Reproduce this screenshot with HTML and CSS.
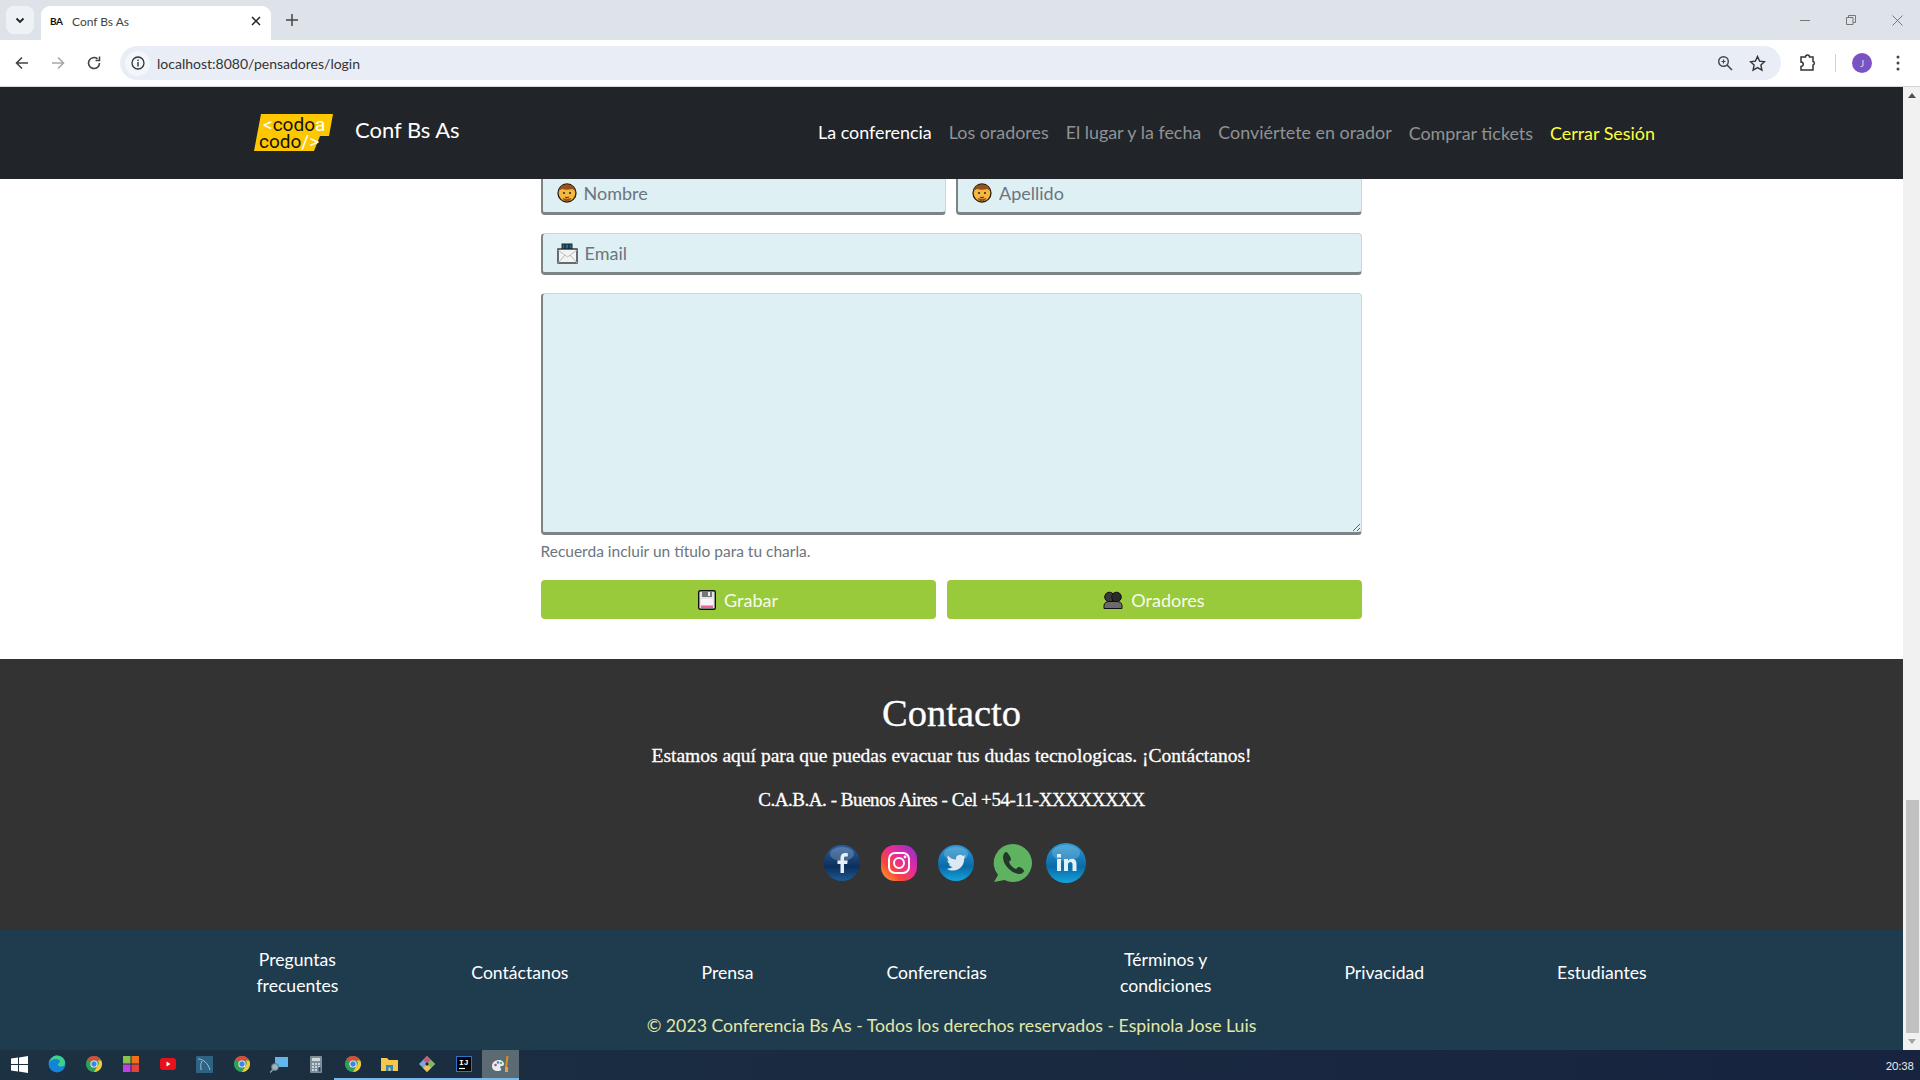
FILE: index.html
```html
<!DOCTYPE html>
<html lang="es">
<head>
  <meta charset="UTF-8" />
  <title>Conf Bs As</title>
  <link rel="stylesheet" href="styles.css">
</head>
<body>

  <svg class="sprites" width="0" height="0">
    <symbol id="man" viewBox="0 0 20 20">
      <circle cx="10" cy="10" r="9" fill="#f6b73f" stroke="#2a1c0c" stroke-width="1.300"/>
      <path d="M2 8.500C2.500 4 5.500 1.500 10 1.500s7.500 2.500 8 7c-1-1.500-2-2.500-3-2.500-3 1-7 1-10 0-1 0-2 1-3 2.500z" fill="#96531f"/>
      <path d="M5.500 15c1 2 2.500 3.500 4.500 3.500s3.500-1.500 4.500-3.500c-3 1-6 1-9 0z" fill="#96531f"/>
      <circle cx="7" cy="10" r="1" fill="#222"/><circle cx="13" cy="10" r="1" fill="#222"/>
      <path d="M8 14c1.300.7 2.700.7 4 0" stroke="#5a2c10" stroke-width="1" fill="none"/>
    </symbol>
    <symbol id="chrome" viewBox="0 0 20 20">
      <circle cx="10" cy="10" r="9" fill="#2f9e56"/>
      <path d="M10 1a9 9 0 0 1 8 5h-8a4 4 0 0 0-4 2L3 4a9 9 0 0 1 7-3z" fill="#e0483e"/>
      <path d="M18 6a9 9 0 0 1-8 13l4-7a4 4 0 0 0 0-6z" fill="#f6c63c"/>
      <circle cx="10" cy="10" r="4" fill="#fff"/><circle cx="10" cy="10" r="3" fill="#3f83e6"/>
    </symbol>
    <linearGradient id="gradFb" x1="0" y1="0" x2="0" y2="1"><stop offset="0" stop-color="#2b5f9e"/><stop offset=".6" stop-color="#0c2f5c"/><stop offset="1" stop-color="#1d5a94"/></linearGradient>
    <linearGradient id="gradBlue" x1="0" y1="0" x2="0" y2="1"><stop offset="0" stop-color="#2f9ad6"/><stop offset=".6" stop-color="#0a6aa8"/><stop offset="1" stop-color="#14a4dc"/></linearGradient>
    <linearGradient id="gradIg" x1="0" y1="1" x2="1" y2="0"><stop offset="0" stop-color="#fdb02c"/><stop offset=".3" stop-color="#f9453b"/><stop offset=".6" stop-color="#e72a9c"/><stop offset="1" stop-color="#8434d0"/></linearGradient>
  </svg>

  <header class="browser">
    <div class="tabstrip">
      <button class="tab-search"><svg width="12" height="12" viewBox="0 0 12 12"><path d="M2.500 4.500 6 8l3.500-3.500" fill="none" stroke="#222" stroke-width="1.800"/></svg></button>
      <div class="tab">
        <b class="favicon">BA</b>
        <span class="tab-title">Conf Bs As</span>
        <svg class="tab-close" width="10" height="10" viewBox="0 0 10 10"><path d="M1 1l8 8M9 1l-8 8" stroke="#222" stroke-width="1.500"/></svg>
      </div>
      <svg class="new-tab" width="12" height="12" viewBox="0 0 12 12"><path d="M6 0v12M0 6h12" stroke="#444" stroke-width="1.500"/></svg>
      <div class="win-controls">
        <svg width="10" height="10" viewBox="0 0 10 10"><path d="M0 5.500h10" stroke="#777"/></svg>
        <svg width="10" height="10" viewBox="0 0 10 10"><path d="M.5 2.500h6.500v7H.5zM2.500 2.500V.5h7v7H7" fill="none" stroke="#777"/></svg>
        <svg width="11" height="11" viewBox="0 0 11 11"><path d="M.5.500l10 10M10.500.500l-10 10" stroke="#777"/></svg>
      </div>
    </div>
    <div class="toolbar">
      <svg width="16" height="16" viewBox="0 0 16 16"><path d="M14 8H3M8 2.500 2.500 8 8 13.500" fill="none" stroke="#444" stroke-width="1.600"/></svg>
      <svg width="16" height="16" viewBox="0 0 16 16"><path d="M2 8h11M8 2.500 13.500 8 8 13.500" fill="none" stroke="#a8a8a8" stroke-width="1.600"/></svg>
      <svg width="16" height="16" viewBox="0 0 16 16"><path d="M13.500 8A5.500 5.500 0 1 1 11.500 3.800M13.500 1.500v4h-4" fill="none" stroke="#444" stroke-width="1.600"/></svg>
      <div class="omnibox">
        <span class="site-info"><svg width="14" height="14" viewBox="0 0 14 14"><circle cx="7" cy="7" r="6" fill="none" stroke="#333" stroke-width="1.300"/><path d="M7 6v4.500M7 3.500v1.500" stroke="#333" stroke-width="1.400"/></svg></span>
        <span class="url">localhost:8080/pensadores/login</span>
        <svg class="omni-zoom" width="16" height="16" viewBox="0 0 16 16"><circle cx="6.500" cy="6.500" r="4.800" fill="none" stroke="#444" stroke-width="1.400"/><path d="M10 10l5 5" stroke="#444" stroke-width="1.600"/><path d="M6.500 4.500v4M4.500 6.500h4" stroke="#444" stroke-width="1.200"/></svg>
        <svg width="17" height="17" viewBox="0 0 17 17"><path d="M8.500 1.500l2.100 4.600 5 .6-3.700 3.400 1 5-4.400-2.500-4.400 2.500 1-5L1.400 6.700l5-.6z" fill="none" stroke="#333" stroke-width="1.400"/></svg>
      </div>
      <svg class="puzzle" width="18" height="18" viewBox="0 0 18 18"><path d="M2 3h4.500a2 2 0 0 1 4 0H14v4.500a1.800 1.800 0 0 1 0 3.500v5H2v-3.500a2 2 0 0 0 0-4.500z" fill="none" stroke="#333" stroke-width="1.500"/></svg>
      <span class="tool-sep"></span>
      <span class="avatar">J</span>
      <svg class="tool-menu" width="4" height="16" viewBox="0 0 4 16"><circle cx="2" cy="2" r="1.500" fill="#444"/><circle cx="2" cy="8" r="1.500" fill="#444"/><circle cx="2" cy="14" r="1.500" fill="#444"/></svg>
    </div>
  </header>

  <div class="viewport">
    <div class="page">
      <nav class="navbar">
        <a class="brand" href="#">
          <svg class="logo" width="79" height="37" viewBox="0 0 79 37">
            <path d="M7 0H79L75 22H66L60 37H0z" fill="#fdc800"/>
            <text x="9" y="17" class="logo-text"><tspan fill="#fff">&lt;</tspan>codo<tspan fill="#fff">a</tspan></text>
            <text x="5" y="34" class="logo-text">codo<tspan fill="#fff">/&gt;</tspan></text>
          </svg>
          <span class="brand-name">Conf Bs As</span>
        </a>
        <ul class="nav-links">
          <li><a class="active" href="#">La conferencia</a></li>
          <li><a href="#">Los oradores</a></li>
          <li><a href="#">El lugar y la fecha</a></li>
          <li><a href="#">Conviértete en orador</a></li>
          <li class="low"><a href="#">Comprar tickets</a></li>
          <li class="low"><a class="logout" href="#">Cerrar Sesión</a></li>
        </ul>
      </nav>

      <main class="content">
        <form class="charla">
          <div class="row">
            <label class="field half">
              <svg class="ico" width="20" height="20"><use href="#man"/></svg>
              <input type="text" placeholder="Nombre" />
            </label>
            <label class="field half">
              <svg class="ico" width="20" height="20"><use href="#man"/></svg>
              <input type="text" placeholder="Apellido" />
            </label>
          </div>
          <label class="field">
            <svg class="ico" width="21" height="21" viewBox="0 0 21 21">
              <rect x="5" y="1" width="10" height="7" fill="#1c6f8e" stroke="#222"/>
              <path d="M8 1v6M12 1v6" stroke="#111"/>
              <rect x="1" y="6" width="19" height="14" fill="#f2f4f4" stroke="#222" stroke-width="1.300"/>
              <path d="M1 7l9.500 7L20 7M1 20l7-8M20 20l-7-8" stroke="#bbb" fill="none"/>
            </svg>
            <input type="text" placeholder="Email" />
          </label>
          <textarea class="charla-text"></textarea>
          <small class="help">Recuerda incluir un título para tu charla.</small>
          <div class="actions">
            <button type="button" class="btn btn-save">
              <svg width="18" height="20" viewBox="0 0 18 20">
                <rect x=".7" y=".7" width="16.600" height="18.600" rx="1.500" fill="#e6e3e6" stroke="#111" stroke-width="1.400"/>
                <rect x="4" y="1" width="10" height="6" fill="#777"/><rect x="10" y="2" width="2" height="4" fill="#eee"/>
                <rect x="3" y="9" width="12" height="9" fill="#f7f3f6"/><rect x="3" y="15.500" width="12" height="2.500" fill="#ef5f9c"/>
              </svg>
              Grabar
            </button>
            <button type="button" class="btn btn-speakers">
              <svg width="20" height="18" viewBox="0 0 20 18">
                <circle cx="6.500" cy="6" r="4.800" fill="#3a3a3a" stroke="#111"/>
                <circle cx="13.500" cy="6" r="4.800" fill="#2b2b2b" stroke="#111"/>
                <path d="M1 17.500v-3c0-3 3-4 5-4h8c2 0 5 1 5 4v3z" fill="#6a6a6a" stroke="#111"/>
              </svg>
              Oradores
            </button>
          </div>
        </form>
      </main>

      <section class="contact">
        <h2>Contacto</h2>
        <p class="contact-intro">Estamos aquí para que puedas evacuar tus dudas tecnologicas. ¡Contáctanos!</p>
        <p class="contact-tel">C.A.B.A. - Buenos Aires - Cel +54-11-XXXXXXXX</p>
        <div class="social">
          <a href="#"><svg width="36" height="36" viewBox="0 0 36 36">
            <circle cx="18" cy="18" r="18" fill="url(#gradFb)"/>
            <ellipse cx="18" cy="9" rx="12" ry="7" fill="#fff" opacity=".2"/>
            <path d="M20 28v-9h3.200l.5-3.600H20v-2.300c0-1 .4-1.700 1.800-1.700h2V8.200c-.6-.1-1.600-.2-2.700-.2-2.700 0-4.600 1.700-4.600 4.700v2.700h-3V19h3v9z" fill="#e8eef5"/>
          </svg></a>
          <a href="#"><svg width="36" height="36" viewBox="0 0 36 36">
            <rect width="36" height="36" rx="14" fill="url(#gradIg)"/>
            <rect x="8" y="8" width="20" height="20" rx="6" fill="none" stroke="#fff" stroke-width="2"/>
            <circle cx="18" cy="18" r="5" fill="none" stroke="#fff" stroke-width="2"/>
            <circle cx="24" cy="12" r="1.400" fill="#fff"/>
          </svg></a>
          <a href="#"><svg width="36" height="36" viewBox="0 0 36 36">
            <circle cx="18" cy="18" r="18" fill="url(#gradBlue)"/>
            <ellipse cx="18" cy="9" rx="12" ry="7" fill="#fff" opacity=".18"/>
            <path d="M28 11.500c-.8.400-1.500.600-2.300.700.800-.5 1.400-1.200 1.700-2.100-.8.400-1.600.800-2.500.9a4 4 0 0 0-6.800 3.600c-3.300-.200-6.200-1.700-8.200-4.200-1 1.900-.5 4 1.200 5.300-.6 0-1.200-.2-1.700-.5 0 1.900 1.300 3.500 3.200 3.900-.6.200-1.200.2-1.800.1.500 1.600 2 2.700 3.700 2.800-1.700 1.300-3.800 1.900-5.900 1.700 5 3.100 11.500 2.300 15-2.200 1.900-2.400 2.700-5.200 2.500-8 .8-.6 1.400-1.200 1.900-2z" fill="#dbe9f3"/>
          </svg></a>
          <a class="wa" href="#"><svg width="40" height="40" viewBox="0 0 40 40">
            <path d="M21 1a19 19 0 1 1-8.500 36L2 39l4-7A19 19 0 0 1 21 1z" fill="#5fb360"/>
            <path d="M14 9c-1 0-3 2-3 5 0 8 8 16 16 17 3 0 5-2 5-3 0-2-4-4-5-4-2 0-2 2-3 2-3-1-6-4-7-7 0-1 2-1 2-3 0-1-3-7-5-7z" fill="#23372a"/>
          </svg></a>
          <a class="in" href="#"><svg width="40" height="40" viewBox="0 0 40 40">
            <circle cx="20" cy="20" r="20" fill="url(#gradBlue)"/>
            <ellipse cx="20" cy="10" rx="14" ry="8" fill="#fff" opacity=".18"/>
            <path d="M11 16h4v12h-4zM11 11h4v3.500h-4zM18 16h4v1.800c1-1.300 2.200-2.100 4-2.100 3 0 4.500 2 4.500 5V28h-4v-6.500c0-1.700-.7-2.600-2.100-2.600-1.500 0-2.400 1-2.400 2.700V28h-4z" fill="#dff0f8"/>
          </svg></a>
        </div>
      </section>

      <footer class="site-footer">
        <ul class="footer-links">
          <li><a href="#">Preguntas<br>frecuentes</a></li>
          <li><a href="#">Contáctanos</a></li>
          <li><a href="#">Prensa</a></li>
          <li><a href="#">Conferencias</a></li>
          <li><a href="#">Términos y<br>condiciones</a></li>
          <li><a href="#">Privacidad</a></li>
          <li><a href="#">Estudiantes</a></li>
        </ul>
        <p class="copyright">© 2023 Conferencia Bs As - Todos los derechos reservados - Espinola Jose Luis</p>
      </footer>
    </div>

    <div class="scrollbar">
      <span class="arrow-up"></span>
      <span class="thumb"></span>
      <span class="arrow-down"></span>
    </div>
  </div>

  <div class="taskbar">
    <div class="task-icons">
      <span class="task"><svg width="17" height="17" viewBox="0 0 17 17"><path d="M0 2.500 7 1.500v6.500H0zM8 1.400 17 0v8H8zM0 9h7v6.500L0 14.500zM8 9h9v8l-9-1.400z" fill="#fff"/></svg></span>
      <span class="task"><svg width="18" height="18" viewBox="0 0 18 18"><circle cx="9" cy="9" r="8.500" fill="#1583d8"/><path d="M1 8c1-5 5-7.500 8-7.500 4 0 8 3 8 7 0 3-2 4-4 4-1.500 0-3-.5-3-2 0-2 2-1 2-3 0-1.500-2-2.500-4-2.500C5 4 2 5.500 1 8z" fill="#3fd18a"/></svg></span>
      <span class="task"><svg width="18" height="18"><use href="#chrome"/></svg></span>
      <span class="task"><svg width="16" height="16" viewBox="0 0 16 16"><rect width="7.500" height="7.500" fill="#8bc34a"/><rect x="8.500" width="7.500" height="7.500" fill="#f0701a"/><rect y="8.500" width="7.500" height="7.500" fill="#c13fe0"/><rect x="8.500" y="8.500" width="7.500" height="7.500" fill="#e8413c"/></svg></span>
      <span class="task"><svg width="16" height="12" viewBox="0 0 16 12"><rect width="16" height="12" rx="3" fill="#e8111c"/><path d="M6.500 3.500v5l4-2.500z" fill="#fff"/></svg></span>
      <span class="task"><svg width="17" height="17" viewBox="0 0 17 17"><rect width="17" height="17" rx="1" fill="#2e6384"/><path d="M2 3c5 0 10 4 12 11M5 14c0-3-1-6 1-9" fill="none" stroke="#9cc3d8"/></svg></span>
      <span class="task"><svg width="18" height="18"><use href="#chrome"/></svg></span>
      <span class="task"><svg width="18" height="17" viewBox="0 0 18 17"><rect x="5" y="1" width="13" height="10" fill="#62b7ea"/><circle cx="5" cy="11" r="3.500" fill="#9fb2bf" stroke="#5b6f7d"/><path d="M3 13.500 0 16.500" stroke="#8aa" stroke-width="1.500"/></svg></span>
      <span class="task"><svg width="12" height="17" viewBox="0 0 12 17"><rect width="12" height="17" rx="1" fill="#7e8f9b"/><rect x="2" y="2" width="8" height="3" fill="#cfd8dd"/><path d="M2 8h2M5 8h2M8 8h2M2 11h2M5 11h2M8 11h2M2 14h2M5 14h2" stroke="#e4eaee" stroke-width="1.500"/><path d="M8.500 11h2v4.500h-2z" fill="#1b4f80"/></svg></span>
      <span class="task open"><svg width="18" height="18"><use href="#chrome"/></svg></span>
      <span class="task open"><svg width="17" height="14" viewBox="0 0 17 14"><path d="M0 1h6l2 2h9v11H0z" fill="#f5c84c"/><rect x="5" y="8" width="7" height="6" fill="#2f86c9"/><rect x="7.500" y="10.500" width="2" height="3.500" fill="#f5c84c"/></svg></span>
      <span class="task open"><svg width="16" height="16" viewBox="0 0 16 16"><path d="M8 0 16 8 8 16 0 8z" fill="#7aa7e0"/><path d="M8 0l4 4-4 4-4-4z" fill="#c65c7a"/><path d="M12 4l4 4-4 4-4-4z" fill="#82b858"/><path d="M8 8l4 4-4 4-4-4z" fill="#e8c554"/><circle cx="8" cy="8" r="1.500" fill="#222"/></svg></span>
      <span class="task open"><svg width="16" height="16" viewBox="0 0 16 16"><rect x=".5" y=".5" width="15" height="15" fill="#000" stroke="#2f73c4"/><path d="M3 12.500h6" stroke="#fff" stroke-width="1.200"/><text x="3" y="9" class="ij-text">IJ</text></svg></span>
      <span class="task open current"><svg width="19" height="17" viewBox="0 0 19 17"><path d="M1 10c0-4 4-6 7-6s5 2 5 4-2 2-3 2-1 2 0 3-1 2-3 2c-4 0-6-2-6-5z" fill="#e6eef5"/><circle cx="4.500" cy="9" r="1.300" fill="#d8433c"/><circle cx="7" cy="6.500" r="1.300" fill="#3f83e6"/><circle cx="10" cy="7" r="1.300" fill="#5cb85c"/><path d="M15 11 16.500 0" stroke="#e08a2e" stroke-width="2"/><path d="M14 11h3v5h-3z" fill="#e8a13c"/></svg></span>
    </div>
    <span class="clock">20:38</span>
  </div>

</body>
</html>
```

FILE: styles.css
```css
* {
  box-sizing: border-box;
}

html, body {
  height: 100%;
}

body {
  margin: 0;
  display: flex;
  flex-direction: column;
  height: 1080px;
  overflow: hidden;
  font-family: Lato, "Open Sans", sans-serif;
  background: #fff;
}

a {
  text-decoration: none;
  color: inherit;
}

ul {
  list-style: none;
  margin: 0;
  padding: 0;
}

.sprites {
  position: absolute;
}

/* browser */
.browser {
  flex: none;
  height: 87px;
  border-bottom: 1px solid #d4d6d8;
}

.tabstrip {
  height: 40px;
  background: #dee3ea;
  display: flex;
  align-items: flex-end;
  padding-left: 6px;
}

.tab-search {
  width: 28px;
  height: 28px;
  margin-bottom: 6px;
  border: 0;
  border-radius: 8px;
  background: #eef1f5;
  display: flex;
  align-items: center;
  justify-content: center;
  padding: 0;
}

.tab {
  width: 230px;
  height: 34px;
  margin-left: 7px;
  padding: 0 10px 4px 9px;
  background: #fff;
  border-radius: 9px 9px 0 0;
  display: flex;
  align-items: center;
}

.favicon {
  width: 22px;
  font-size: 10px;
  letter-spacing: -0.5px;
  color: #111;
}

.tab-title {
  flex: 1;
  font-size: 12px;
  color: #444;
}

.new-tab {
  margin: 0 0 14px 15px;
}

.win-controls {
  margin-left: auto;
  height: 40px;
  width: 120px;
  display: flex;
  gap: 36px;
  align-items: center;
}

.toolbar {
  height: 46px;
  background: #fff;
  display: flex;
  align-items: center;
  padding-left: 14px;
  gap: 20px;
  border-radius: 10px 10px 0 0;
}

.toolbar > * {
  flex: none;
}

.omnibox {
  width: 1661px;
  height: 34px;
  margin-left: -2px;
  background: #e9eef6;
  border-radius: 17px;
  display: flex;
  align-items: center;
  padding: 0 15px 0 5px;
  gap: 16px;
}

.site-info {
  width: 25px;
  height: 25px;
  border-radius: 50%;
  background: #f3f6fb;
  display: flex;
  align-items: center;
  justify-content: center;
  margin-right: -9px;
}

.url {
  flex: 1;
  font-size: 14px;
  color: #333;
}

.puzzle {
  margin-left: -2px;
}

.tool-sep {
  width: 1px;
  height: 18px;
  background: #c9d4e6;
  margin-left: -2px;
}

.avatar {
  width: 20px;
  height: 20px;
  border-radius: 50%;
  background: #7a52c4;
  color: #ddd;
  font-size: 10px;
  display: flex;
  align-items: center;
  justify-content: center;
  margin-left: -4px;
}

.tool-menu {
  margin-left: 4px;
}

/* page */
.viewport {
  flex: 1;
  display: flex;
  min-height: 0;
}

.page {
  flex: 1;
  min-width: 0;
  display: flex;
  flex-direction: column;
  overflow: hidden;
}

.navbar {
  position: relative;
  z-index: 2;
  flex: none;
  height: 92px;
  background: #212529;
  display: flex;
  align-items: center;
  padding: 0 248px 0 254px;
  justify-content: space-between;
}

.brand {
  display: flex;
  align-items: center;
  gap: 22px;
  color: #fff;
  font-size: 22px;
  margin-top: -2px;
}

.brand-name {
  margin-bottom: 5px;
}

.logo {
  overflow: visible;
}

.logo-text {
  font: 400 19px Roboto, sans-serif;
  fill: #111;
}

.nav-links {
  display: flex;
  gap: 17px;
  font-size: 17.900px;
  color: #909294;
  margin-top: -2px;
}

.nav-links .active {
  color: #fff;
}

.nav-links .low {
  margin-top: 1px;
}

.nav-links .logout {
  color: #ffff33;
}

.content {
  flex: none;
  height: 480px;
  padding: 0 1px 40px 0;
}

.charla {
  width: 821px;
  margin: -6px auto 0;
  display: flex;
  flex-direction: column;
}

.row {
  display: flex;
  gap: 10px;
}

.field {
  display: flex;
  align-items: center;
  height: 42px;
  padding-left: 14px;
  background: #def0f3;
  border: 1px solid #ced4da;
  border-left: 2px solid #7d8486;
  border-bottom: 3px solid #7d8486;
  border-radius: 4px;
  margin-bottom: 18px;
}

.half {
  flex: 1;
}

.ico {
  flex: none;
}

.field input {
  flex: 1;
  min-width: 0;
  height: 100%;
  border: 0;
  outline: 0;
  padding: 0 0 0 7px;
  background: transparent;
  font: 18px Lato, sans-serif;
}

.field input::placeholder {
  color: #6c757d;
  opacity: 1;
}

.charla-text {
  height: 242px;
  background: #def0f3;
  border: 1px solid #ced4da;
  border-left: 2px solid #7d8486;
  border-bottom: 3px solid #7d8486;
  border-radius: 4px;
  resize: vertical;
  outline: 0;
}

.help {
  margin-top: 6px;
  font-size: 15.500px;
  line-height: 20px;
  color: #6c757d;
}

.actions {
  display: flex;
  gap: 11px;
  margin-top: 19px;
}

.btn {
  height: 39px;
  border: 0;
  border-radius: 4px;
  background: #99ca3c;
  color: #f8fbe8;
  font: 18px Lato, sans-serif;
  display: flex;
  align-items: center;
  justify-content: center;
  gap: 8px;
}

.btn-save {
  width: 395px;
}

.btn-speakers {
  width: 415px;
}

.contact {
  flex: none;
  height: 271px;
  background: #333;
  color: #fff;
  text-align: center;
  font-family: "Liberation Serif", serif;
  padding-top: 33px;
  -webkit-text-stroke: 0.3px #fff;
}

.contact h2 {
  margin: 0 0 9px;
  font-size: 38.500px;
  line-height: 42px;
  font-weight: 400;
}

.contact p {
  margin: 0 0 18px;
  line-height: 26px;
}

.contact-intro {
  font-size: 19.500px;
}

.contact-tel {
  font-size: 19px;
  letter-spacing: -0.45px;
}

.social {
  margin-top: 30px;
  padding-left: 7px;
  display: flex;
  justify-content: center;
  align-items: center;
  gap: 21px;
  -webkit-text-stroke: 0;
}

.social a {
  display: flex;
}

.social .wa {
  margin-left: -3px;
}

.social .in {
  margin-left: -7px;
}

.site-footer {
  flex: 1;
  background: #1f3c4f;
  color: #fff;
  padding-top: 17px;
}

.footer-links {
  display: flex;
  justify-content: center;
  gap: 133px;
  align-items: center;
  text-align: center;
  font-size: 17.600px;
  line-height: 26px;
}

.copyright {
  margin: 14px 0 0;
  text-align: center;
  color: #e3e8a8;
  font-size: 17.700px;
  line-height: 26px;
}

.scrollbar {
  flex: none;
  width: 17px;
  background: #f1f1f1;
  display: flex;
  flex-direction: column;
  align-items: center;
  padding: 0 0 0 1px;
}

.arrow-up {
  margin-top: 6px;
  border: 4px solid transparent;
  border-top: 0;
  border-bottom: 5px solid #505050;
}

.thumb {
  width: 13px;
  height: 233px;
  margin-top: auto;
  background: #c1c1c1;
}

.arrow-down {
  margin: 6px 0 6px;
  border: 4px solid transparent;
  border-bottom: 0;
  border-top: 5px solid #a3a3a3;
}

/* taskbar */
.taskbar {
  flex: none;
  height: 30px;
  background: linear-gradient(90deg, #1c3141, #17233f);
  display: flex;
  align-items: center;
  justify-content: space-between;
}

.task-icons {
  display: flex;
  height: 100%;
  padding-left: 1px;
}

.task {
  width: 37px;
  height: 30px;
  display: flex;
  align-items: center;
  justify-content: center;
  border-bottom: 2px solid transparent;
}

.task.open {
  border-bottom-color: #76b9ed;
}

.task.current {
  background: #5b6a73;
}

.ij-text {
  font: bold 8px "Liberation Mono", monospace;
  fill: #fff;
}

.clock {
  padding-right: 6px;
  font-size: 11px;
  color: #e6e9ee;
}
```
